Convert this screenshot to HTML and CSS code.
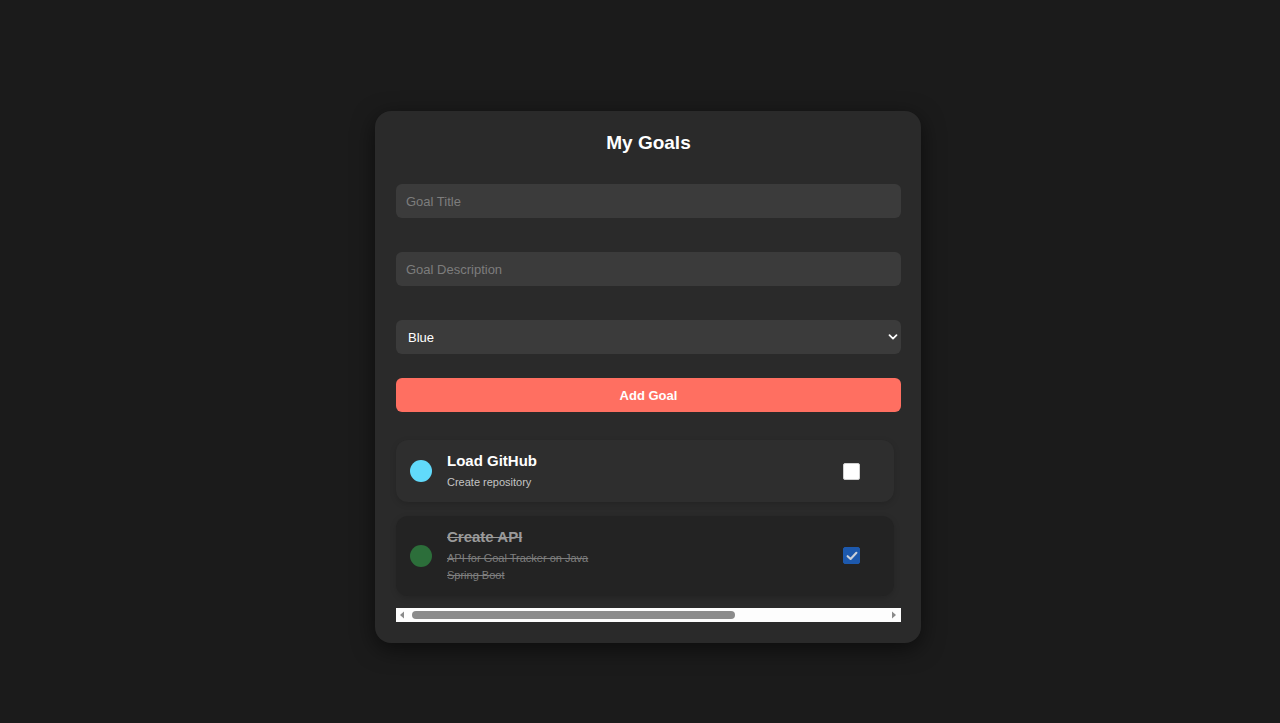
FILE: index.html
```html
<!DOCTYPE html>
<html lang="en">
<head>
<meta charset="utf-8">
<title>My Goals</title>
<link rel="stylesheet" href="styles.css">
</head>
<body>
<main class="card">
  <h1 class="title">My Goals</h1>
  <input class="field field-gap" type="text" placeholder="Goal Title">
  <input class="field field-gap" type="text" placeholder="Goal Description">
  <div class="select-wrap">
    <select class="field select">
      <option>Blue</option>
      <option>Green</option>
      <option>Red</option>
    </select>
    <svg class="chevron" width="10" height="8" viewBox="0 0 10 8"><path d="M1.5 2.2 L5 5.6 L8.5 2.2" fill="none" stroke="#fff" stroke-width="1.8" stroke-linecap="round" stroke-linejoin="round"/></svg>
  </div>
  <button class="add-btn" type="button">Add Goal</button>

  <div class="list">
    <div class="goal">
      <span class="dot dot-blue"></span>
      <div class="goal-text">
        <div class="goal-title">Load GitHub</div>
        <div class="goal-desc">Create repository</div>
      </div>
      <span class="check"></span>
    </div>
    <div class="goal goal-done">
      <span class="dot dot-green"></span>
      <div class="goal-text">
        <div class="goal-title">Create API</div>
        <div class="goal-desc">API for Goal Tracker on Java Spring Boot</div>
      </div>
      <span class="check check-on">
        <svg width="12" height="10" viewBox="0 0 12 10"><path d="M1.6 5.2 L4.6 8 L10.4 1.8" fill="none" stroke="#c9cfd8" stroke-width="2.1" stroke-linecap="round" stroke-linejoin="round"/></svg>
      </span>
    </div>
  </div>

  <div class="scrollbar">
    <svg class="arrow" width="6" height="8" viewBox="0 0 6 8"><path d="M5 0.5 L1 4 L5 7.5 Z" fill="#8a8a8a"/></svg>
    <div class="track"><div class="thumb"></div></div>
    <svg class="arrow" width="6" height="8" viewBox="0 0 6 8"><path d="M1 0.5 L5 4 L1 7.5 Z" fill="#8a8a8a"/></svg>
  </div>
</main>
</body>
</html>
```

FILE: styles.css
```css
* { box-sizing: border-box; }

html, body {
  margin: 0;
  padding: 0;
}

body {
  background: #1b1b1b;
  font-family: "Liberation Sans", Arial, sans-serif;
  color: #fff;
  min-height: 723px;
  display: flex;
  justify-content: center;
  align-items: flex-start;
  padding-top: 111px;
  padding-left: 16px;
}

.card {
  width: 546px;
  background: #2a2a2a;
  border-radius: 16px;
  padding: 21px 20px 21px 21px;
  box-shadow: 0 6px 22px rgba(0, 0, 0, 0.55);
  display: flex;
  flex-direction: column;
}

.title {
  margin: 0 0 30px;
  font-size: 19px;
  line-height: 22px;
  font-weight: 700;
  text-align: center;
}

.field {
  display: block;
  width: 100%;
  height: 34px;
  border: none;
  outline: none;
  border-radius: 6px;
  background: #3b3b3b;
  color: #fff;
  font-family: "Liberation Sans", Arial, sans-serif;
  font-size: 13px;
  padding: 0 10px;
}

.field::placeholder {
  color: #7d7d7d;
}

.field-gap {
  margin-bottom: 34px;
}

.select-wrap {
  position: relative;
  margin-bottom: 24px;
}

.select {
  appearance: none;
  -webkit-appearance: none;
  padding-left: 12px;
}

.chevron {
  position: absolute;
  right: 3px;
  top: 13px;
}

.add-btn {
  height: 34px;
  border: none;
  border-radius: 6px;
  background: #ff6f61;
  color: #fff;
  font-family: "Liberation Sans", Arial, sans-serif;
  font-size: 13px;
  font-weight: 700;
  margin-bottom: 28px;
}

.list {
  display: flex;
  flex-direction: column;
  gap: 14px;
  width: 498px;
  margin-bottom: 12px;
}

.goal {
  display: flex;
  align-items: center;
  background: #2e2e2e;
  border-radius: 12px;
  padding: 11px 34px 11px 14px;
  box-shadow: 0 2px 6px rgba(0, 0, 0, 0.15);
}

.goal-done {
  padding-bottom: 12px;
}

.dot {
  width: 22px;
  height: 22px;
  border-radius: 50%;
  flex: none;
  margin-right: 15px;
}

.dot-blue { background: #61dafb; }
.dot-green { background: #2c6e3a; }

.goal-text {
  width: 160px;
  flex: none;
}

.goal-title {
  font-size: 15px;
  line-height: 20px;
  font-weight: 700;
  color: #fff;
  margin-bottom: 3px;
}

.goal-desc {
  font-size: 11px;
  line-height: 17px;
  color: #c4c4c4;
}

.goal-done {
  background: #232323;
}

.goal-done .goal-title {
  color: #9a9a9a;
  text-decoration: line-through;
}

.goal-done .goal-desc {
  color: #7e7e7e;
  text-decoration: line-through;
}

.check {
  margin-left: auto;
  width: 17px;
  height: 17px;
  border-radius: 2px;
  background: #fff;
  border: 1px solid #d0d0d0;
  flex: none;
  display: flex;
  align-items: center;
  justify-content: center;
}

.check-on {
  background: #1d59ad;
  border-color: #1d59ad;
}

.scrollbar {
  display: flex;
  align-items: center;
  height: 14px;
  background: #fdfdfd;
  padding: 0 4px 0 3px;
  gap: 4px;
}

.arrow { flex: none; }

.track {
  flex: 1;
  height: 8px;
  margin-left: 3px;
}

.thumb {
  width: 323px;
  height: 8px;
  border-radius: 4px;
  background: #8b8b8b;
}
```
